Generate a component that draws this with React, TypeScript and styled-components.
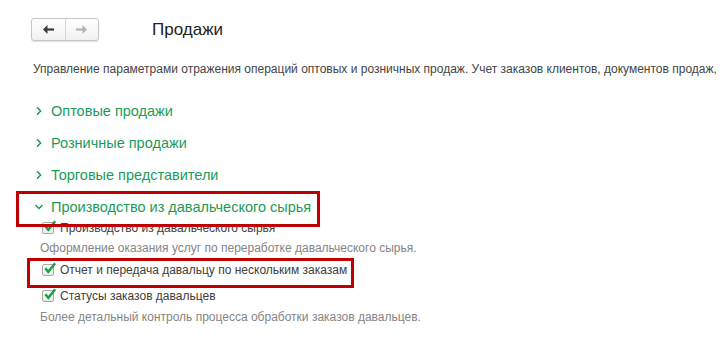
import React from "react";
import styled, { createGlobalStyle } from "styled-components";

const Global = createGlobalStyle`
  html, body { margin: 0; padding: 0; background: #fff; }
  body { font-family: Arial, "Liberation Sans", sans-serif; color: #333; }
`;

const Page = styled.div`
  position: relative;
  width: 722px;
  height: 352px;
  overflow: hidden;
  background: #fff;
`;

const Header = styled.div`
  display: flex;
  align-items: center;
  margin-top: 18px;
  padding-left: 31px;
  height: 23px;
`;

const NavGroup = styled.div`
  display: flex;
  width: 68px;
  height: 23px;
  box-sizing: border-box;
  border: 1px solid #c6c6c6;
  border-radius: 3px;
  background: linear-gradient(#ffffff, #f1f1f1);
  box-shadow: 0 1px 1px rgba(0, 0, 0, 0.12);
`;

const NavButton = styled.div<{ $divider?: boolean }>`
  flex: 1;
  display: flex;
  align-items: center;
  justify-content: center;
  border-left: ${(p) => (p.$divider ? "1px solid #d6d6d6" : "none")};
`;

const Title = styled.div`
  margin-left: 53px;
  font-size: 17px;
  color: #222;
  line-height: 23px;
`;

const Intro = styled.div`
  margin-top: 20px;
  padding-left: 33px;
  font-size: 12px;
  line-height: 16px;
  color: #444;
  white-space: nowrap;
`;

const Groups = styled.div`
  margin-top: 21px;
  display: flex;
  flex-direction: column;
  gap: 6px;
`;

const GroupHeader = styled.div`
  display: flex;
  align-items: center;
  height: 26px;
  padding-left: 34px;
  font-size: 14.5px;
  color: #1a9c58;
  white-space: nowrap;
`;

const Chevron = styled.span`
  display: inline-flex;
  width: 10px;
  justify-content: center;
  margin-right: 7px;
`;

const GroupBody = styled.div`
  display: flex;
  flex-direction: column;
  margin-top: -6px;
`;

const CheckRow = styled.div<{ $mt: number }>`
  display: flex;
  align-items: center;
  height: 16px;
  margin-top: ${(p) => p.$mt}px;
  padding-left: 42px;
  font-size: 12px;
  color: #404040;
  white-space: nowrap;
`;

const Box = styled.span`
  position: relative;
  width: 12px;
  height: 12px;
  box-sizing: border-box;
  border: 1px solid #a8a8a8;
  border-radius: 2px;
  background: linear-gradient(#ffffff, #ececec);
  margin-right: 6px;
  flex: none;
`;

const Check = styled.svg`
  position: absolute;
  left: 1px;
  top: -3px;
`;

const Hint = styled.div<{ $mt: number }>`
  height: 16px;
  line-height: 16px;
  margin-top: ${(p) => p.$mt}px;
  padding-left: 40px;
  font-size: 12px;
  color: #858585;
  white-space: nowrap;
`;

const Mark = styled.div<{ $l: number; $t: number; $w: number; $h: number }>`
  position: absolute;
  left: ${(p) => p.$l}px;
  top: ${(p) => p.$t}px;
  width: ${(p) => p.$w}px;
  height: ${(p) => p.$h}px;
  box-sizing: border-box;
  border: 3px solid #c00000;
  pointer-events: none;
`;

const Arrow = ({ dir, color }: { dir: "left" | "right"; color: string }) => (
  <svg width="11" height="9" viewBox="0 0 11 9">
    <g transform={dir === "right" ? "translate(11,0) scale(-1,1)" : undefined}>
      <path d="M0 4.5 L4.5 0 L4.5 9 Z" fill={color} />
      <rect x="4" y="3.4" width="7" height="2.2" fill={color} />
    </g>
  </svg>
);

const ChevronIcon = ({ open }: { open?: boolean }) =>
  open ? (
    <svg width="10" height="10" viewBox="0 0 10 10">
      <path d="M1.5 3 L5 6.5 L8.5 3" fill="none" stroke="#1a9c58" strokeWidth="1.5" />
    </svg>
  ) : (
    <svg width="10" height="10" viewBox="0 0 10 10">
      <path d="M3 1.3 L6.6 5 L3 8.7" fill="none" stroke="#1a9c58" strokeWidth="1.5" />
    </svg>
  );

const CheckBox = () => (
  <Box>
    <Check width="12" height="12" viewBox="0 0 12 12">
      <path d="M1.3 6.3 L4.3 9.8 L11.2 1.3" fill="none" stroke="#18a144" strokeWidth="2.5" />
    </Check>
  </Box>
);

export default function App() {
  const groups = ["Оптовые продажи", "Розничные продажи", "Торговые представители"];
  return (
    <Page>
      <Global />
      <Header>
        <NavGroup>
          <NavButton>
            <Arrow dir="left" color="#3c3c3c" />
          </NavButton>
          <NavButton $divider>
            <Arrow dir="right" color="#b4b4b4" />
          </NavButton>
        </NavGroup>
        <Title>Продажи</Title>
      </Header>
      <Intro>
        Управление параметрами отражения операций оптовых и розничных продаж. Учет заказов клиентов, документов продаж,
      </Intro>
      <Groups>
        {groups.map((g) => (
          <GroupHeader key={g}>
            <Chevron>
              <ChevronIcon />
            </Chevron>
            {g}
          </GroupHeader>
        ))}
        <GroupHeader>
          <Chevron>
            <ChevronIcon open />
          </Chevron>
          Производство из давальческого сырья
        </GroupHeader>
        <GroupBody>
          <CheckRow $mt={0}>
            <CheckBox />
            Производство из давальческого сырья
          </CheckRow>
          <Hint $mt={4}>Оформление оказания услуг по переработке давальческого сырья.</Hint>
          <CheckRow $mt={6}>
            <CheckBox />
            Отчет и передача давальцу по нескольким заказам
          </CheckRow>
          <CheckRow $mt={10}>
            <CheckBox />
            Статусы заказов давальцев
          </CheckRow>
          <Hint $mt={5}>Более детальный контроль процесса обработки заказов давальцев.</Hint>
        </GroupBody>
      </Groups>
      <Mark $l={16} $t={191} $w={304} $h={36} />
      <Mark $l={27} $t={258} $w={327} $h={30} />
    </Page>
  );
}
